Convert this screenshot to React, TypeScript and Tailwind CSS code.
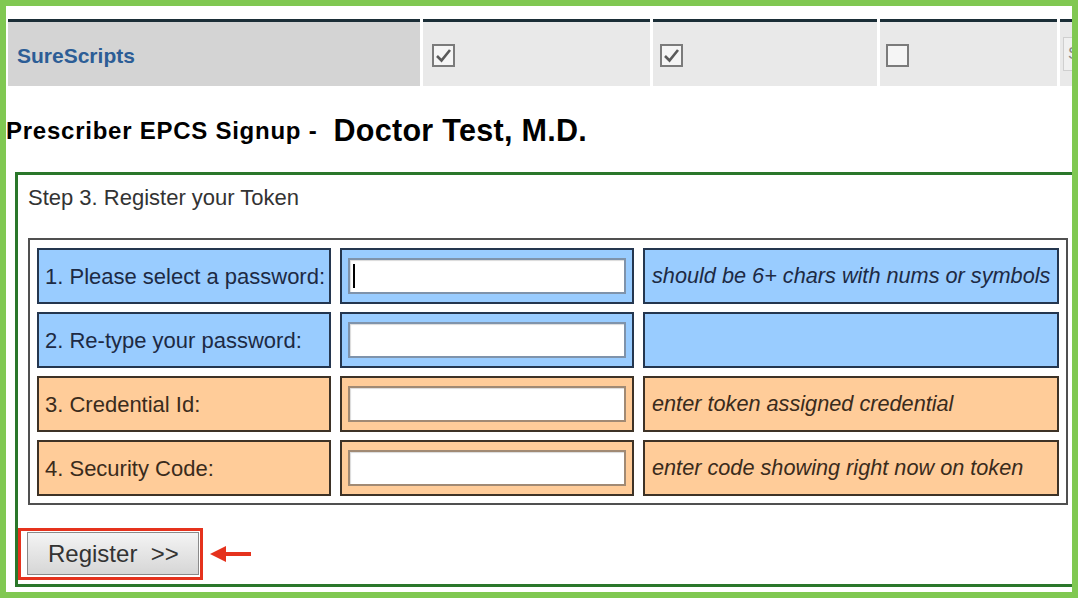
import React from "react";

type Row = {
  label: string;
  hint: string;
  tone: "blue" | "orange";
  caret?: boolean;
};

const rows: Row[] = [
  { label: "1. Please select a password:", hint: "should be 6+ chars with nums or symbols", tone: "blue", caret: true },
  { label: "2. Re-type your password:", hint: "", tone: "blue" },
  { label: "3. Credential Id:", hint: "enter token assigned credential", tone: "orange" },
  { label: "4. Security Code:", hint: "enter code showing right now on token", tone: "orange" },
];

const Checkbox = ({ checked }: { checked: boolean }) => (
  <div className="flex h-[23px] w-[23px] items-center justify-center border-2 border-[#7b7b7b] bg-[#f5f5f5]">
    {checked && (
      <svg width="17" height="15" viewBox="0 0 17 15">
        <path d="M2 8 L6.5 12.5 L15 2" fill="none" stroke="#5a5a5a" strokeWidth="2.6" />
      </svg>
    )}
  </div>
);

const FormRow = ({ row }: { row: Row }) => {
  const cell =
    row.tone === "blue"
      ? "bg-[#99ccff] border-[#24364f] text-[#1d2a44]"
      : "bg-[#ffcc99] border-[#3d3226] text-[#3a2b1c]";
  const input = row.tone === "blue" ? "border-[#7f93ab]" : "border-[#a18a74]";
  return (
    <div className="flex h-[56px] gap-[9px]">
      <div className={`flex w-[294px] items-center border-2 pl-[6px] text-[22px] ${cell}`}>{row.label}</div>
      <div className={`flex w-[294px] items-center border-2 px-[6px] ${cell}`}>
        <div className={`relative h-[36px] w-full border-2 bg-white shadow-[inset_1px_1px_1px_rgba(0,0,0,0.15)] ${input}`}>
          {row.caret && <div className="absolute left-[3px] top-[4px] h-[24px] w-[2px] bg-black" />}
        </div>
      </div>
      <div className={`flex w-[416px] items-center border-2 pl-[7px] text-[21.7px] italic ${cell}`}>{row.hint}</div>
    </div>
  );
};

export default function App() {
  return (
    <div className="h-[598px] w-[1078px] overflow-hidden border-[6px] border-[#80c852] bg-white font-['Liberation_Sans',Arial,sans-serif]">
      {/* provider row */}
      <div className="ml-[2px] mt-[13px] flex gap-[3px]">
        <div className="flex h-[67px] w-[412px] shrink-0 items-center border-t-[3px] border-[#1b2e37] bg-[#d4d4d4] pl-[9px] pt-[3px] text-[21px] font-bold text-[#2c5d96]">
          SureScripts
        </div>
        <div className="flex h-[67px] w-[227px] shrink-0 items-center border-t-[3px] border-[#1b2e37] bg-[#e9e9e9] pl-[9px] pt-[3px]">
          <Checkbox checked />
        </div>
        <div className="flex h-[67px] w-[224px] shrink-0 items-center border-t-[3px] border-[#1b2e37] bg-[#e9e9e9] pl-[7px] pt-[3px]">
          <Checkbox checked />
        </div>
        <div className="flex h-[67px] w-[177px] shrink-0 items-center border-t-[3px] border-[#1b2e37] bg-[#e9e9e9] pl-[6px] pt-[3px]">
          <Checkbox checked={false} />
        </div>
        <div className="flex h-[67px] w-[60px] shrink-0 items-center border-t-[3px] border-[#1b2e37] bg-[#e9e9e9] pl-[3px]">
          <div className="flex h-[34px] w-[30px] items-center border border-[#cfcfcf] bg-[#f0f0f0] pl-[4px] text-[17px] text-[#888]">S</div>
        </div>
      </div>

      <div className="mt-[27px] flex h-[36px] items-center">
        <span className="text-[24px] font-bold tracking-[0.75px] text-black">Prescriber EPCS Signup -</span>
        <span className="ml-[16px] text-[30.5px] font-bold tracking-[0.3px] text-black">Doctor Test, M.D.</span>
      </div>

      {/* step panel */}
      <div className="ml-[9px] mt-[23px] h-[415px] w-[1080px] border-[3px] border-[#2a772a] bg-white">
        <div className="pl-[10px] pt-[11px] text-[22px] leading-[24px] text-[#333]">Step 3. Register your Token</div>

        <div className="ml-[10px] mt-[28px] flex w-[1040px] flex-col gap-[8px] border-2 border-[#505050] px-[7px] pb-[7px] pt-[8px]">
          {rows.map((r) => (
            <FormRow key={r.label} row={r} />
          ))}
        </div>

        <div className="mt-[23px] flex items-center">
          <div className="border-[3px] border-[#e5321d] pb-[2px] pl-[6px] pr-[1px] pt-[1px]">
            <button className="h-[43px] w-[172px] border border-[#8a8a8a] bg-gradient-to-b from-[#f4f4f4] to-[#d6d6d6] pl-[20px] text-left text-[24px] text-[#333]">
              Register&nbsp;&nbsp;&gt;&gt;
            </button>
          </div>
          <svg className="ml-[7px]" width="42" height="18" viewBox="0 0 42 18">
            <path d="M0 9 L16 1 L16 17 Z" fill="#e5321d" />
            <rect x="15" y="7" width="26" height="4" fill="#e5321d" />
          </svg>
        </div>
      </div>
    </div>
  );
}
